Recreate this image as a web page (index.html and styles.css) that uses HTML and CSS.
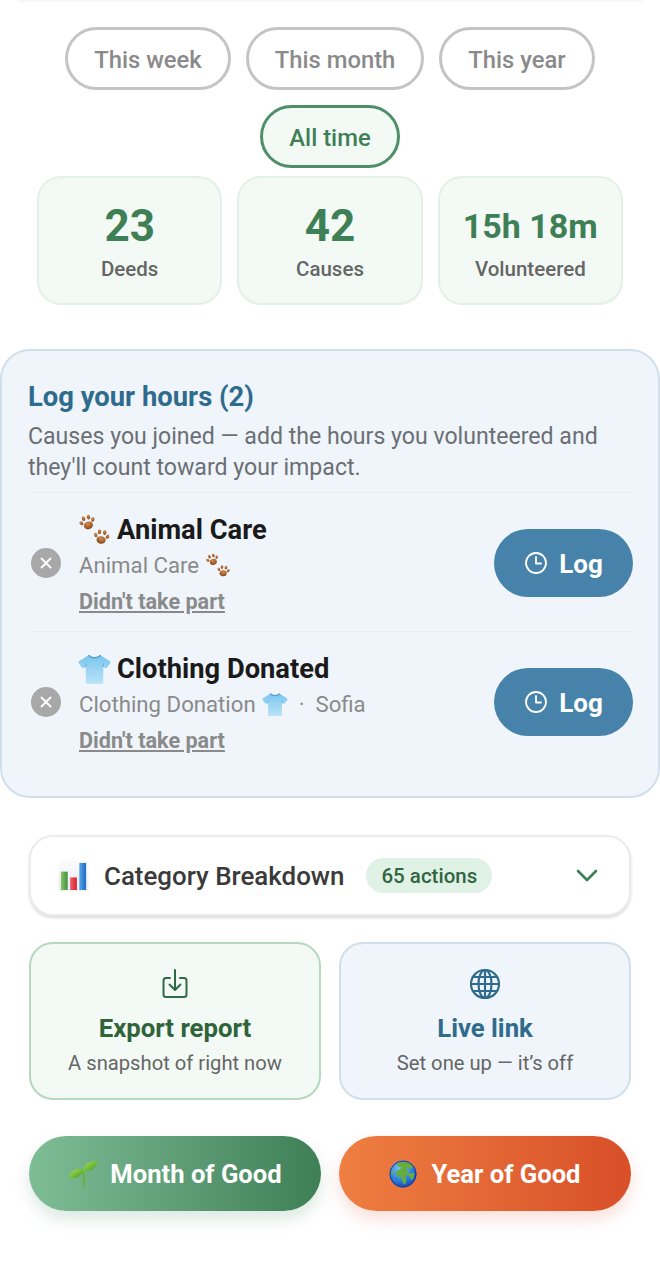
FILE: index.html
```html
<!DOCTYPE html>
<html lang="en">
<head>
<meta charset="utf-8">
<title>Impact</title>
<link rel="stylesheet" href="styles.css">
</head>
<body>
<svg class="sprite" aria-hidden="true">
  <defs>
    <radialGradient id="padFill" cx="50%" cy="30%" r="75%"><stop offset="0" stop-color="#d98a4a"/><stop offset="1" stop-color="#7c4019"/></radialGradient>
    <linearGradient id="teeFill" x1="0" y1="0" x2="0" y2="1"><stop offset="0" stop-color="#7cc6ee"/><stop offset="1" stop-color="#b9e3f8"/></linearGradient>
    <linearGradient id="barG" x1="0" y1="0" x2="1" y2="0"><stop offset="0" stop-color="#8cc46a"/><stop offset="1" stop-color="#3f9142"/></linearGradient>
    <linearGradient id="barR" x1="0" y1="0" x2="1" y2="0"><stop offset="0" stop-color="#f0606c"/><stop offset="1" stop-color="#d3222f"/></linearGradient>
    <linearGradient id="barB" x1="0" y1="0" x2="1" y2="0"><stop offset="0" stop-color="#58a6ea"/><stop offset="1" stop-color="#1c69c4"/></linearGradient>
    <linearGradient id="chartBg" x1="0" y1="0" x2="0" y2="1"><stop offset="0" stop-color="#fcfcfc"/><stop offset="1" stop-color="#e8ebee"/></linearGradient>
    <linearGradient id="leaf" x1="0" y1="0" x2="1" y2="1"><stop offset="0" stop-color="#b4e252"/><stop offset="1" stop-color="#3d9a2a"/></linearGradient>
    <radialGradient id="sea" cx="40%" cy="30%" r="75%"><stop offset="0" stop-color="#7fc4f2"/><stop offset="0.6" stop-color="#2b7fdc"/><stop offset="1" stop-color="#1a3fae"/></radialGradient>
    <g id="pawOne">
      <ellipse cx="0" cy="3" rx="4.600" ry="3.800" fill="url(#padFill)"/>
      <ellipse cx="-6" cy="-1.200" rx="1.600" ry="2.200" transform="rotate(-30 -6 -1.200)" fill="url(#padFill)"/>
      <ellipse cx="-2.600" cy="-4.800" rx="1.700" ry="2.300" fill="url(#padFill)"/>
      <ellipse cx="2.600" cy="-4.800" rx="1.700" ry="2.300" fill="url(#padFill)"/>
      <ellipse cx="6" cy="-1.200" rx="1.600" ry="2.200" transform="rotate(30 6 -1.200)" fill="url(#padFill)"/>
    </g>
    <symbol id="paws" viewBox="0 0 32 32">
      <use href="#pawOne" transform="translate(9 8.500) rotate(-18)"/>
      <use href="#pawOne" transform="translate(23 23) rotate(8)"/>
    </symbol>
    <symbol id="tee" viewBox="0 0 32 30">
      <path d="M10.500 1.500L1 7.500c-.6.4-.7 1.100-.3 1.700l3.200 4.600c.4.500 1 .6 1.500.3L7.500 13v14.800c0 .9.600 1.500 1.500 1.500h14c.9 0 1.500-.6 1.500-1.500V13l2.100 1.100c.5.300 1.100.2 1.500-.3l3.200-4.600c.4-.6.300-1.300-.3-1.700l-9.500-6C20 4 12 4 10.500 1.500z" fill="url(#teeFill)"/>
      <path d="M10.500 1.500C12 5 20 5 21.500 1.500" fill="none" stroke="#4f9fd0" stroke-width="1.400"/>
      <path d="M7.500 13v-3M24.500 13v-3" stroke="#64b0de" stroke-width="1"/>
    </symbol>
    <symbol id="chart" viewBox="0 0 32 32">
      <rect x="0.500" y="0.500" width="31" height="31" rx="1" fill="url(#chartBg)"/>
      <rect x="3" y="12" width="7" height="19" fill="url(#barG)"/>
      <rect x="12.500" y="18" width="7" height="13" fill="url(#barR)"/>
      <rect x="22" y="3" width="7" height="28" fill="url(#barB)"/>
    </symbol>
    <symbol id="sprout" viewBox="0 0 30 28">
      <path d="M15 10c.8 5.500 1.500 11 .8 17" fill="none" stroke="#6fae45" stroke-width="2.200" stroke-linecap="round"/>
      <path d="M0.500 17.500C3 10 10 7 15 10c-1 6-7.500 10.500-14.500 7.500z" fill="url(#leaf)"/>
      <path d="M15 11C15.500 4 22 .5 29.500.8 29.500 7 22.500 13 15 11z" fill="url(#leaf)"/>
    </symbol>
    <symbol id="globe" viewBox="0 0 28 28">
      <circle cx="14" cy="14" r="13.500" fill="url(#sea)"/>
      <path d="M7 4.500C10 2 15 1.500 19 2.500c2.500.8 4.800 2.500 6 4.500l-2.500.5-1 2-3-1.500-1.500 1.500 2.500 2-1 1.500 4 .5 2.500-1c.5 3-.5 6-2 8-1.500-1-2 -3-2.500-4.500l-3-1c-1.500 1-1.500 3 0 5l-1 3.500-1.500 1c-2-3-2-6-3.500-7.500-2.500 0-4.500-1.500-4.500-4 0-2 2-3.500 4-3.500l1.500-2-3-1z" fill="#64ad3c"/>
      <path d="M3 9.500c1 1.500 1.500 3 1 5l-2-.5c0-1.700.3-3.200 1-4.500z" fill="#64ad3c"/>
      <circle cx="14" cy="14" r="13" fill="none" stroke="#1a3aa8" stroke-width="1"/>
    </symbol>
  </defs>
</svg>
<div class="top-edge"></div>
<div class="pills">
  <span class="pill">This week</span>
  <span class="pill">This month</span>
  <span class="pill">This year</span>
  <span class="pill active">All time</span>
</div>
<div class="stats">
  <div class="stat"><div class="stat-value">23</div><div class="stat-label">Deeds</div></div>
  <div class="stat"><div class="stat-value">42</div><div class="stat-label">Causes</div></div>
  <div class="stat"><div class="stat-value small">15h 18m</div><div class="stat-label">Volunteered</div></div>
</div>
<section class="log-card">
  <h2 class="log-title">Log your hours (2)</h2>
  <p class="log-desc">Causes you joined — add the hours you volunteered and they'll count toward your impact.</p>
  <div class="log-row">
    <span class="dismiss"><svg viewBox="0 0 12 12" width="12" height="12"><path d="M1.500 1.500l9 9M10.500 1.500l-9 9" stroke="#fff" stroke-width="1.900" stroke-linecap="round" fill="none"/></svg></span>
    <div class="log-info">
      <div class="log-name"><svg class="emoji-name paw-name"><use href="#paws"/></svg>Animal Care</div>
      <div class="log-meta">Animal Care<svg class="emoji-meta paw-meta"><use href="#paws"/></svg></div>
      <div class="log-skip">Didn't take part</div>
    </div>
    <button class="log-btn"><svg viewBox="0 0 24 24" width="24" height="24" fill="none" stroke="#fff" stroke-width="1.800" stroke-linecap="round" stroke-linejoin="round"><circle cx="12" cy="12" r="10"/><path d="M12 6v6.500h5"/></svg><span class="log-word">Log</span></button>
  </div>
  <div class="log-row">
    <span class="dismiss"><svg viewBox="0 0 12 12" width="12" height="12"><path d="M1.500 1.500l9 9M10.500 1.500l-9 9" stroke="#fff" stroke-width="1.900" stroke-linecap="round" fill="none"/></svg></span>
    <div class="log-info">
      <div class="log-name"><svg class="emoji-name tee-name"><use href="#tee"/></svg>Clothing Donated</div>
      <div class="log-meta">Clothing Donation<svg class="emoji-meta tee-meta"><use href="#tee"/></svg><span class="meta-dot">·</span>Sofia</div>
      <div class="log-skip">Didn't take part</div>
    </div>
    <button class="log-btn"><svg viewBox="0 0 24 24" width="24" height="24" fill="none" stroke="#fff" stroke-width="1.800" stroke-linecap="round" stroke-linejoin="round"><circle cx="12" cy="12" r="10"/><path d="M12 6v6.500h5"/></svg><span class="log-word">Log</span></button>
  </div>
</section>
<div class="breakdown">
  <svg class="bd-icon"><use href="#chart"/></svg>
  <span class="bd-title">Category Breakdown</span>
  <span class="bd-badge">65 actions</span>
  <svg class="bd-chevron" viewBox="0 0 22 13" width="22" height="13" fill="none" stroke="#3f7f56" stroke-width="2.600" stroke-linecap="round" stroke-linejoin="round"><path d="M2 2l9 9 9-9"/></svg>
</div>
<div class="tiles">
  <div class="tile green">
    <svg viewBox="0 0 26 32" width="26" height="32" fill="none" stroke="#2f6a44" stroke-width="2" stroke-linecap="round" stroke-linejoin="round"><path d="M8 10H4a2.500 2.500 0 0 0-2.500 2.500v14A2.500 2.500 0 0 0 4 29h18a2.500 2.500 0 0 0 2.500-2.500v-14A2.500 2.500 0 0 0 22 10h-4"/><path d="M13 2v20M7.500 16.500L13 22l5.500-5.500"/></svg>
    <div class="tile-title">Export report</div>
    <div class="tile-sub">A snapshot of right now</div>
  </div>
  <div class="tile blue">
    <svg viewBox="0 0 32 32" width="32" height="32" fill="none" stroke="#2f6b8c" stroke-width="2.200"><circle cx="16" cy="16" r="14"/><ellipse cx="16" cy="16" rx="6.500" ry="14"/><path d="M16 2v28M2 16h28M4 9h24M4 23h24"/></svg>
    <div class="tile-title">Live link</div>
    <div class="tile-sub">Set one up — it’s off</div>
  </div>
</div>
<div class="cta-row">
  <div class="cta month"><svg class="cta-emoji sprout-icon"><use href="#sprout"/></svg>Month of Good</div>
  <div class="cta year"><svg class="cta-emoji globe-icon"><use href="#globe"/></svg>Year of Good</div>
</div>
</body>
</html>
```
FILE: styles.css
```css
* { box-sizing: border-box; }
html, body { margin: 0; padding: 0; background: #fff; }
body {
  width: 660px;
  height: 1278px;
  overflow: hidden;
  font-family: Roboto, "Noto Sans", sans-serif;
  color: #222;
}
.sprite {
  position: absolute;
  width: 0;
  height: 0;
}
.top-edge {
  height: 2px;
  margin: 0 18px;
  background: #f6f7f6;
}
.pills {
  display: flex;
  flex-wrap: wrap;
  justify-content: center;
  gap: 15px;
  margin-top: 25px;
  padding: 0 37px;
}
.pill {
  display: flex;
  align-items: center;
  height: 63px;
  padding: 2px 26px 0;
  border: 3px solid #c4c4c4;
  border-radius: 32px;
  font-size: 23.800px;
  font-weight: 500;
  color: #8a8a8a;
  background: #fff;
}
.pill.active {
  border-color: #4f8f68;
  background: #f3faf5;
  color: #3f7f56;
}
.stats {
  display: grid;
  grid-template-columns: repeat(3, 1fr);
  gap: 15px;
  margin-top: 8px;
  padding: 0 37px;
}
.stat {
  height: 129px;
  display: flex;
  flex-direction: column;
  align-items: center;
  background: #f3faf5;
  border: 2px solid #e2f0e7;
  border-radius: 24px;
}
.stat-value {
  height: 62px;
  margin-top: 22px;
  font-size: 44px;
  line-height: 52px;
  font-weight: 700;
  color: #3f7f56;
}
.stat-value.small {
  font-size: 34px;
}
.stat-label {
  font-size: 20.500px;
  line-height: 24px;
  font-weight: 500;
  color: #666;
  margin-top: -5px;
}
.log-card {
  margin-top: 44px;
  height: 449px;
  padding: 30px 25px 0 26px;
  background: #eff5fb;
  border: 2px solid #cfe0ec;
  border-radius: 30px;
}
.log-title {
  margin: 0;
  font-size: 27.400px;
  line-height: 32px;
  font-weight: 700;
  color: #2f6b8c;
}
.log-desc {
  margin: 8px 0 0;
  font-size: 23.100px;
  line-height: 31px;
  color: #6b6f73;
  padding-bottom: 9px;
}
.log-row {
  display: flex;
  align-items: center;
  height: 139px;
  border-top: 1px solid #e6edf4;
  padding: 2px 0 0 3px;
}
.dismiss {
  flex: none;
  display: flex;
  align-items: center;
  justify-content: center;
  width: 30px;
  height: 30px;
  border-radius: 50%;
  background: #a8a8a8;
  margin-right: 18px;
}
.log-info {
  flex: 1;
  min-width: 0;
  padding-top: 3px;
}
.log-name {
  display: flex;
  align-items: center;
  font-size: 27.300px;
  line-height: 36px;
  font-weight: 700;
  color: #1a1a1a;
}
.emoji-name { flex: none; width: 33px; height: 32px; margin: 0 6px 0 -1px; }
.log-meta {
  display: flex;
  align-items: center;
  font-size: 22.200px;
  line-height: 34px;
  color: #8a8a8a;
}
.emoji-meta { flex: none; width: 26px; height: 25px; margin-left: 6px; }
.meta-dot { margin: 0 11px 0 11px; }
.log-skip {
  font-size: 21.600px;
  line-height: 30px;
  margin-top: 5px;
  font-weight: 700;
  color: #8a8a8a;
  text-decoration: underline;
}
.log-btn {
  flex: none;
  display: flex;
  align-items: center;
  justify-content: center;
  gap: 11px;
  width: 139px;
  height: 68px;
  border: 0;
  padding: 0;
  border-radius: 34px;
  background: #4682a9;
  color: #fff;
  font-family: inherit;
  font-size: 26px;
  font-weight: 700;
}
.log-word { padding-top: 2px; }
.breakdown {
  display: flex;
  align-items: center;
  margin: 37px 29px 0;
  height: 81px;
  padding: 0 31px 0 27px;
  background: #fff;
  border: 2px solid #ececec;
  border-radius: 24px;
  box-shadow: 0 2px 3px rgba(0, 0, 0, 0.14);
}
.bd-icon {
  flex: none;
  width: 31px;
  height: 31px;
  margin-right: 15px;
}
.bd-title {
  font-size: 25.900px;
  font-weight: 500;
  color: #3a3a3a;
}
.bd-badge {
  margin-left: 22px;
  height: 35px;
  padding: 0 15px;
  border-radius: 18px;
  background: #e0f1e6;
  color: #30663f;
  font-size: 20.500px;
  font-weight: 500;
  line-height: 36px;
}
.bd-chevron {
  margin-left: auto;
}
.tiles {
  display: grid;
  grid-template-columns: 292px 292px;
  justify-content: space-between;
  margin: 26px 29px 0;
}
.tile {
  display: flex;
  flex-direction: column;
  align-items: center;
  height: 158px;
  padding-top: 24px;
  border-radius: 24px;
  border: 2px solid;
}
.tile.green { background: #f3faf5; border-color: #b4d8c0; }
.tile.blue { background: #eff5fb; border-color: #cfe0ec; }
.tile-title {
  margin-top: 11px;
  font-size: 25.700px;
  line-height: 34px;
  font-weight: 700;
}
.green .tile-title { color: #2f6339; }
.blue .tile-title { color: #2f6b8c; }
.tile-sub {
  margin-top: 2px;
  font-size: 20.200px;
  line-height: 32px;
  color: #666;
}
.cta-row {
  display: grid;
  grid-template-columns: 292px 292px;
  justify-content: space-between;
  margin: 36px 29px 0;
}
.cta {
  display: flex;
  align-items: center;
  justify-content: center;
  height: 75px;
  border-radius: 38px;
  color: #fff;
  font-size: 25.600px;
  font-weight: 700;
}
.cta-emoji { flex: none; }
.sprout-icon { width: 30px; height: 28px; margin-right: 12px; }
.globe-icon { width: 28px; height: 28px; margin-right: 14px; }
.cta.month {
  background: linear-gradient(90deg, #7fbd97, #3f7f56);
  box-shadow: 0 8px 16px rgba(63, 127, 86, 0.18);
}
.cta.year {
  background: linear-gradient(90deg, #ef7f42, #d84f28);
  box-shadow: 0 8px 16px rgba(216, 79, 40, 0.18);
}
```
